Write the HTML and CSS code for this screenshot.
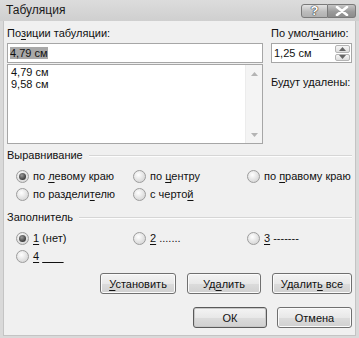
FILE: index.html
```html
<!DOCTYPE html>
<html>
<head>
  <meta charset="utf-8"/>
  <title>Табуляция</title>
  <link rel="stylesheet" href="styles.css">
</head>
<body>
  <div class="dialog">
    <div class="titlebar">
      <span class="title">Табуляция</span>
      <div class="caption-btns">
        <span class="cap-btn cap-help">?</span>
        <span class="cap-btn cap-close">
          <svg width="14" height="10" viewBox="0 0 14 10">
            <path d="M2 1 L12 9 M12 1 L2 9" stroke="#fff" stroke-width="2.6" stroke-linecap="round"/>
          </svg>
        </span>
      </div>
    </div>

    <div class="panel">
      <div class="top">
        <div class="col-left">
          <div class="label">По<u>з</u>иции табуляции:</div>
          <div class="field"><span class="selected">4,79 см</span></div>
          <div class="list">
            <div class="list-items">
              <div>4,79 см</div>
              <div>9,58 см</div>
            </div>
            <div class="scrollbar">
              <svg width="7" height="4" viewBox="0 0 7 4"><path d="M0 4 L3.5 0 L7 4 Z" fill="#b4b4b4"/></svg>
              <svg width="7" height="4" viewBox="0 0 7 4"><path d="M0 0 L3.5 4 L7 0 Z" fill="#b4b4b4"/></svg>
            </div>
          </div>
        </div>
        <div class="col-right">
          <div class="label">По умол<u>ч</u>анию:</div>
          <div class="spin">
            <span class="spin-value">1,25 см</span>
            <div class="spin-btns">
              <span class="spin-btn"><svg width="7" height="4" viewBox="0 0 7 4"><path d="M0 4 L3.5 0 L7 4 Z" fill="#666"/></svg></span>
              <span class="spin-btn"><svg width="7" height="4" viewBox="0 0 7 4"><path d="M0 0 L3.5 4 L7 0 Z" fill="#666"/></svg></span>
            </div>
          </div>
          <div class="label note">Будут удалены:</div>
        </div>
      </div>

      <div class="group-head"><span>Выравнивание</span></div>
      <div class="options">
        <label class="radio checked"><i></i><span>по <u>л</u>евому краю</span></label>
        <label class="radio"><i></i><span>по <u>ц</u>ентру</span></label>
        <label class="radio"><i></i><span>по <u>п</u>равому краю</span></label>
        <label class="radio"><i></i><span>по раздели<u>т</u>елю</span></label>
        <label class="radio"><i></i><span>с черто<u>й</u></span></label>
      </div>

      <div class="group-head fill-head"><span>Заполнитель</span></div>
      <div class="options">
        <label class="radio checked"><i></i><span><u>1</u> (нет)</span></label>
        <label class="radio"><i></i><span><u>2</u> .......</span></label>
        <label class="radio"><i></i><span><u>3</u> -------</span></label>
        <label class="radio"><i></i><span><u>4</u> <u>&nbsp;&nbsp;&nbsp;&nbsp;&nbsp;&nbsp;&nbsp;</u></span></label>
      </div>

      <div class="btn-row">
        <button class="btn w76"><u>У</u>становить</button>
        <button class="btn w74">Уд<u>а</u>лить</button>
        <button class="btn w80">Удалит<u>ь</u> все</button>
      </div>
      <div class="btn-row row-ok">
        <button class="btn btn-default w74">ОК</button>
        <button class="btn w75">Отмена</button>
      </div>
    </div>
  </div>
</body>
</html>
```

FILE: styles.css
```css
html, body {
  margin: 0;
  padding: 0;
  background: #f0f0f0;
}

body {
  font-family: 'Liberation Sans', Arial, sans-serif;
  font-size: 11px;
  color: #111;
}

u {
  text-decoration-thickness: 1px;
  text-underline-offset: 2px;
}

.dialog {
  width: 359px;
  height: 338px;
  box-sizing: border-box;
  background: #d9d9d9;
  padding: 0 3px 2px 3px;
  display: flex;
  flex-direction: column;
  overflow: hidden;
}

/* title bar */
.titlebar {
  height: 21px;
  flex: none;
  display: flex;
  align-items: flex-start;
  background: linear-gradient(#dcdcdc, #cfcfcf);
  margin: 0 -3px;
  padding: 0 3px 0 6px;
}

.title {
  font-size: 12px;
  line-height: 20px;
  color: #1a1a1a;
}

.caption-btns {
  margin-left: auto;
  margin-top: 4px;
  display: flex;
}

.cap-btn {
  height: 14px;
  box-sizing: border-box;
  border: 1px solid #7a7a7a;
  display: flex;
  align-items: center;
  justify-content: center;
}

.cap-help {
  width: 27px;
  border-radius: 3px 0 0 3px;
  background: linear-gradient(#e4e4e4, #bdbdbd 55%, #b0b0b0);
  color: #fff;
  font-size: 13px;
  font-weight: bold;
  line-height: 12px;
  text-shadow: 0 0 1px #333, 0 0 1px #333, 0 0 1px #333;
}

.cap-close {
  width: 28px;
  border-left: none;
  border-radius: 0 3px 3px 0;
  background: linear-gradient(#c6c6c6, #9a9a9a 55%, #8c8c8c);
}

/* body of dialog */
.panel {
  flex: 1;
  background: #f0f0f0;
  border: 1px solid #c4c4c4;
  border-top: none;
  padding: 5px 3px 0 3px;
}

.top {
  display: flex;
  gap: 8px;
}

.col-left {
  width: 256px;
}

.col-right {
  flex: 1;
}

.label {
  line-height: 15px;
  margin-bottom: 2px;
  white-space: nowrap;
}

.note {
  margin-top: 12px;
}

.field {
  height: 20px;
  box-sizing: border-box;
  border: 1px solid #a6a6a6;
  background: #fff;
  padding: 1px 2px;
  line-height: 16px;
}

.selected {
  background: #a8a8a8;
}

.list {
  height: 80px;
  box-sizing: border-box;
  margin-top: 1px;
  border: 1px solid #a6a6a6;
  background: #fff;
  display: flex;
}

.list-items {
  flex: 1;
  padding: 1px 3px;
  line-height: 12px;
}

.scrollbar {
  width: 16px;
  background: #f4f4f4;
  border-left: 1px solid #ececec;
  display: flex;
  flex-direction: column;
  align-items: center;
  justify-content: space-between;
  padding: 7px 0 6px;
}

.spin {
  height: 20px;
  box-sizing: border-box;
  border: 1px solid #a6a6a6;
  background: #fff;
  display: flex;
}

.spin-value {
  flex: 1;
  padding: 1px 2px;
  line-height: 16px;
}

.spin-btns {
  width: 15px;
  display: flex;
  flex-direction: column;
  gap: 1px;
  padding: 1px;
}

.spin-btn {
  flex: 1;
  border: 1px solid #b4b4b4;
  border-radius: 2px;
  background: linear-gradient(#f6f6f6, #dedede);
  display: flex;
  align-items: center;
  justify-content: center;
}

/* group headers with rule */
.group-head {
  display: flex;
  align-items: center;
  line-height: 15px;
  margin-top: 4px;
}

.group-head::after {
  content: "";
  flex: 1;
  height: 1px;
  background: #d6d6d6;
  border-bottom: 1px solid #fdfdfd;
  margin-left: 6px;
}

.fill-head {
  margin-top: 7px;
}

.options {
  display: grid;
  grid-template-columns: 117px 114px 1fr;
  grid-auto-rows: 18px;
  padding: 4px 0 0 9px;
}

.radio {
  display: flex;
  align-items: center;
  white-space: nowrap;
}

.radio i {
  width: 13px;
  height: 13px;
  box-sizing: border-box;
  border-radius: 50%;
  border: 1px solid #9c9c9c;
  background: radial-gradient(circle at 40% 35%, #ffffff, #e2e2e2 55%, #cfcfcf);
  margin-right: 4px;
  flex: none;
  position: relative;
}

.radio.checked i::after {
  content: "";
  position: absolute;
  left: 2px;
  top: 2px;
  width: 7px;
  height: 7px;
  border-radius: 50%;
  background: radial-gradient(circle at 40% 35%, #9a9a9a, #3c3c3c 70%);
}

/* buttons */
.btn-row {
  display: flex;
  justify-content: flex-end;
  gap: 11px;
  margin-top: 8px;
}

.row-ok {
  gap: 10px;
  margin-top: 13px;
}

.btn {
  height: 21px;
  box-sizing: border-box;
  padding: 0;
  border: 1px solid #707070;
  border-radius: 3px;
  background: linear-gradient(#f4f4f4, #e8e8e8 50%, #dcdcdc 51%, #d0d0d0);
  font-family: inherit;
  font-size: 11px;
  color: #111;
  box-shadow: inset 0 0 0 1px #fbfbfb;
}

.btn-default {
  border-color: #5a5a5a;
  box-shadow: inset 0 0 0 1px #c8c8c8;
}

.w74 { width: 74px; }
.w75 { width: 75px; }
.w76 { width: 76px; }
.w80 { width: 80px; }
```
